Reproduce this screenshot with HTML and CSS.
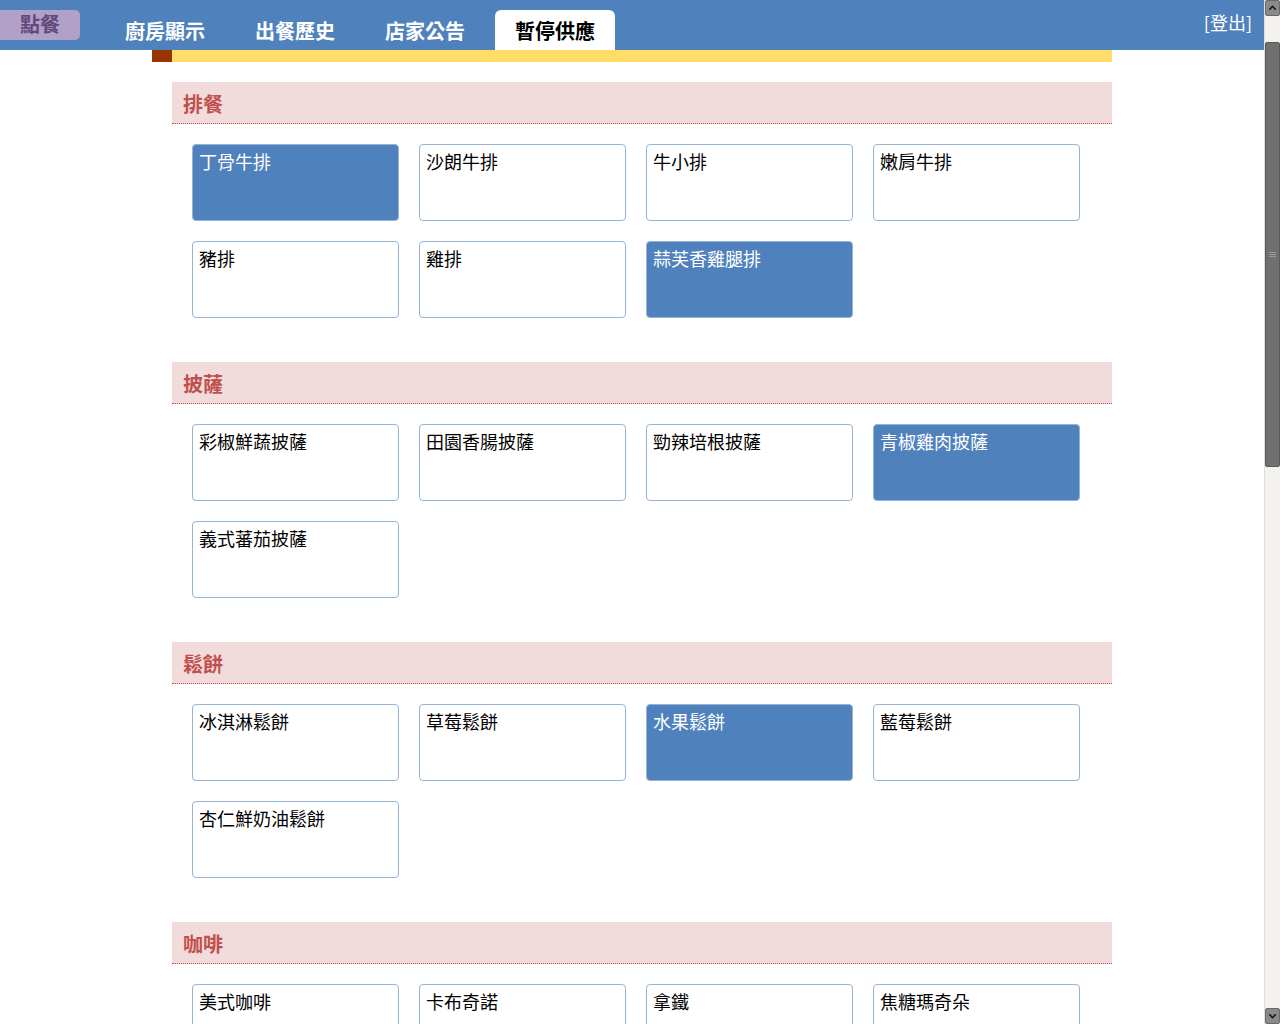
FILE: index.html
```html
<!DOCTYPE html>
<html lang="zh-Hant">
<head>
<meta charset="utf-8">
<title>暫停供應</title>
<link rel="stylesheet" href="styles.css">
</head>
<body>
<header class="topbar">
  <a class="order-btn">點餐</a>
  <nav class="tabs">
    <a class="tab">廚房顯示</a>
    <a class="tab">出餐歷史</a>
    <a class="tab">店家公告</a>
    <a class="tab active">暫停供應</a>
  </nav>
  <a class="logout">[登出]</a>
</header>

<main class="content">
  <div class="strip"><span class="strip-mark"></span></div>

  <section class="category">
    <h2 class="cat-title">排餐</h2>
    <div class="items">
      <div class="item on">丁骨牛排</div>
      <div class="item">沙朗牛排</div>
      <div class="item">牛小排</div>
      <div class="item">嫩肩牛排</div>
      <div class="item">豬排</div>
      <div class="item">雞排</div>
      <div class="item on">蒜芙香雞腿排</div>
    </div>
  </section>

  <section class="category">
    <h2 class="cat-title">披薩</h2>
    <div class="items">
      <div class="item">彩椒鮮蔬披薩</div>
      <div class="item">田園香腸披薩</div>
      <div class="item">勁辣培根披薩</div>
      <div class="item on">青椒雞肉披薩</div>
      <div class="item">義式蕃茄披薩</div>
    </div>
  </section>

  <section class="category">
    <h2 class="cat-title">鬆餅</h2>
    <div class="items">
      <div class="item">冰淇淋鬆餅</div>
      <div class="item">草莓鬆餅</div>
      <div class="item on">水果鬆餅</div>
      <div class="item">藍莓鬆餅</div>
      <div class="item">杏仁鮮奶油鬆餅</div>
    </div>
  </section>

  <section class="category">
    <h2 class="cat-title">咖啡</h2>
    <div class="items">
      <div class="item">美式咖啡</div>
      <div class="item">卡布奇諾</div>
      <div class="item">拿鐵</div>
      <div class="item">焦糖瑪奇朵</div>
      <div class="item">摩卡咖啡</div>
    </div>
  </section>

  <section class="category">
    <h2 class="cat-title">茶飲</h2>
    <div class="items">
      <div class="item">紅茶</div>
      <div class="item">綠茶</div>
      <div class="item">奶茶</div>
      <div class="item">水果茶</div>
      <div class="item">花草茶</div>
    </div>
  </section>

  <section class="category">
    <h2 class="cat-title">果汁</h2>
    <div class="items">
      <div class="item">柳橙汁</div>
      <div class="item">蘋果汁</div>
      <div class="item">西瓜汁</div>
      <div class="item">綜合果汁</div>
      <div class="item">奇異果汁</div>
    </div>
  </section>

  <section class="category">
    <h2 class="cat-title">甜點</h2>
    <div class="items">
      <div class="item">提拉米蘇</div>
      <div class="item">起司蛋糕</div>
      <div class="item">巧克力布朗尼</div>
      <div class="item">焦糖布丁</div>
      <div class="item">檸檬塔</div>
    </div>
  </section>

  <section class="category">
    <h2 class="cat-title">沙拉</h2>
    <div class="items">
      <div class="item">凱撒沙拉</div>
      <div class="item">田園沙拉</div>
      <div class="item">鮮蝦沙拉</div>
      <div class="item">雞肉沙拉</div>
    </div>
  </section>
</main>

<div class="scrollbar" aria-hidden="true">
  <div class="sb-btn">
    <svg width="16" height="16" viewBox="0 0 16 16"><path d="M4 10 L8 6 L12 10" fill="none" stroke="#1e1e1e" stroke-width="2"/></svg>
  </div>
  <div class="sb-gap"></div>
  <div class="sb-thumb"><span class="sb-grip"></span></div>
  <div class="sb-track"></div>
  <div class="sb-btn">
    <svg width="16" height="16" viewBox="0 0 16 16"><path d="M4 6 L8 10 L12 6" fill="none" stroke="#1e1e1e" stroke-width="2"/></svg>
  </div>
</div>
</body>
</html>
```

FILE: styles.css
```css
html, body {
  margin: 0;
  padding: 0;
  background: #ffffff;
}

body {
  margin-right: 16px;
  font-family: "Noto Sans CJK TC", "Noto Sans", "Liberation Sans", sans-serif;
  color: #000000;
}

.topbar {
  display: flex;
  align-items: flex-start;
  height: 50px;
  background: #4f81bd;
}

.order-btn {
  display: block;
  width: 80px;
  height: 30px;
  margin-top: 10px;
  background: #b1a0c7;
  border-radius: 0 5px 5px 0;
  color: #60497a;
  font-size: 20px;
  font-weight: bold;
  line-height: 28px;
  text-align: center;
}

.tabs {
  display: flex;
  gap: 10px;
  margin-left: 25px;
  margin-top: 10px;
}

.tab {
  display: block;
  width: 120px;
  height: 40px;
  box-sizing: border-box;
  padding-top: 7px;
  border-radius: 6px 6px 0 0;
  color: #ffffff;
  font-size: 20px;
  font-weight: bold;
  line-height: 28px;
  text-align: center;
}

.tab.active {
  background: #ffffff;
  color: #000000;
}

.logout {
  display: block;
  margin-left: auto;
  margin-right: 12px;
  margin-top: 9px;
  color: #ffffff;
  font-size: 18px;
  line-height: 26px;
}

.content {
  width: 960px;
  margin-left: 152px;
  padding-bottom: 30px;
}

.strip {
  display: flex;
  height: 12px;
  background: #ffdd66;
}

.strip-mark {
  width: 20px;
  height: 12px;
  background: #993300;
}

.category {
  margin-left: 20px;
  padding-top: 20px;
  padding-bottom: 24px;
}

.cat-title {
  margin: 0;
  height: 41px;
  padding-left: 11px;
  background: #f2dcdb;
  border-bottom: 1px dotted #c0504d;
  color: #c0504d;
  font-size: 20px;
  font-weight: bold;
  line-height: 43px;
}

.items {
  display: flex;
  flex-wrap: wrap;
  gap: 20px;
  padding-left: 20px;
  margin-top: 20px;
}

.item {
  width: 207px;
  height: 77px;
  box-sizing: border-box;
  padding: 3px 6px;
  border: 1px solid #95b3d7;
  border-radius: 4px;
  background: #ffffff;
  font-size: 18px;
  line-height: 26px;
}

.item.on {
  background: #4f81bd;
  color: #ffffff;
}

/* window scrollbar as seen in the screenshot */
.scrollbar {
  position: fixed;
  top: 0;
  right: 0;
  width: 16px;
  height: 100vh;
  display: flex;
  flex-direction: column;
  background: #f4f2ee;
  border-left: 1px solid #e2e0dc;
  box-sizing: border-box;
}

.sb-btn {
  flex: 0 0 16px;
  height: 16px;
  background: #8a8a8a;
  border: 1px solid #6a6a6a;
  border-radius: 2px;
  box-sizing: border-box;
  display: flex;
  align-items: center;
  justify-content: center;
}

.sb-btn svg {
  display: block;
  width: 14px;
  height: 14px;
}

.sb-gap {
  flex: 0 0 26px;
}

.sb-thumb {
  flex: 0 0 425px;
  background: #6f706f;
  border: 1px solid #585958;
  border-radius: 2px;
  box-sizing: border-box;
  display: flex;
  align-items: center;
  justify-content: center;
}

.sb-grip {
  width: 7px;
  height: 5px;
  border-top: 1px solid #9a9a9a;
  border-bottom: 1px solid #9a9a9a;
  box-sizing: border-box;
  background: linear-gradient(#9a9a9a, #9a9a9a) center / 100% 1px no-repeat;
}

.sb-track {
  flex: 1 1 auto;
}
```
